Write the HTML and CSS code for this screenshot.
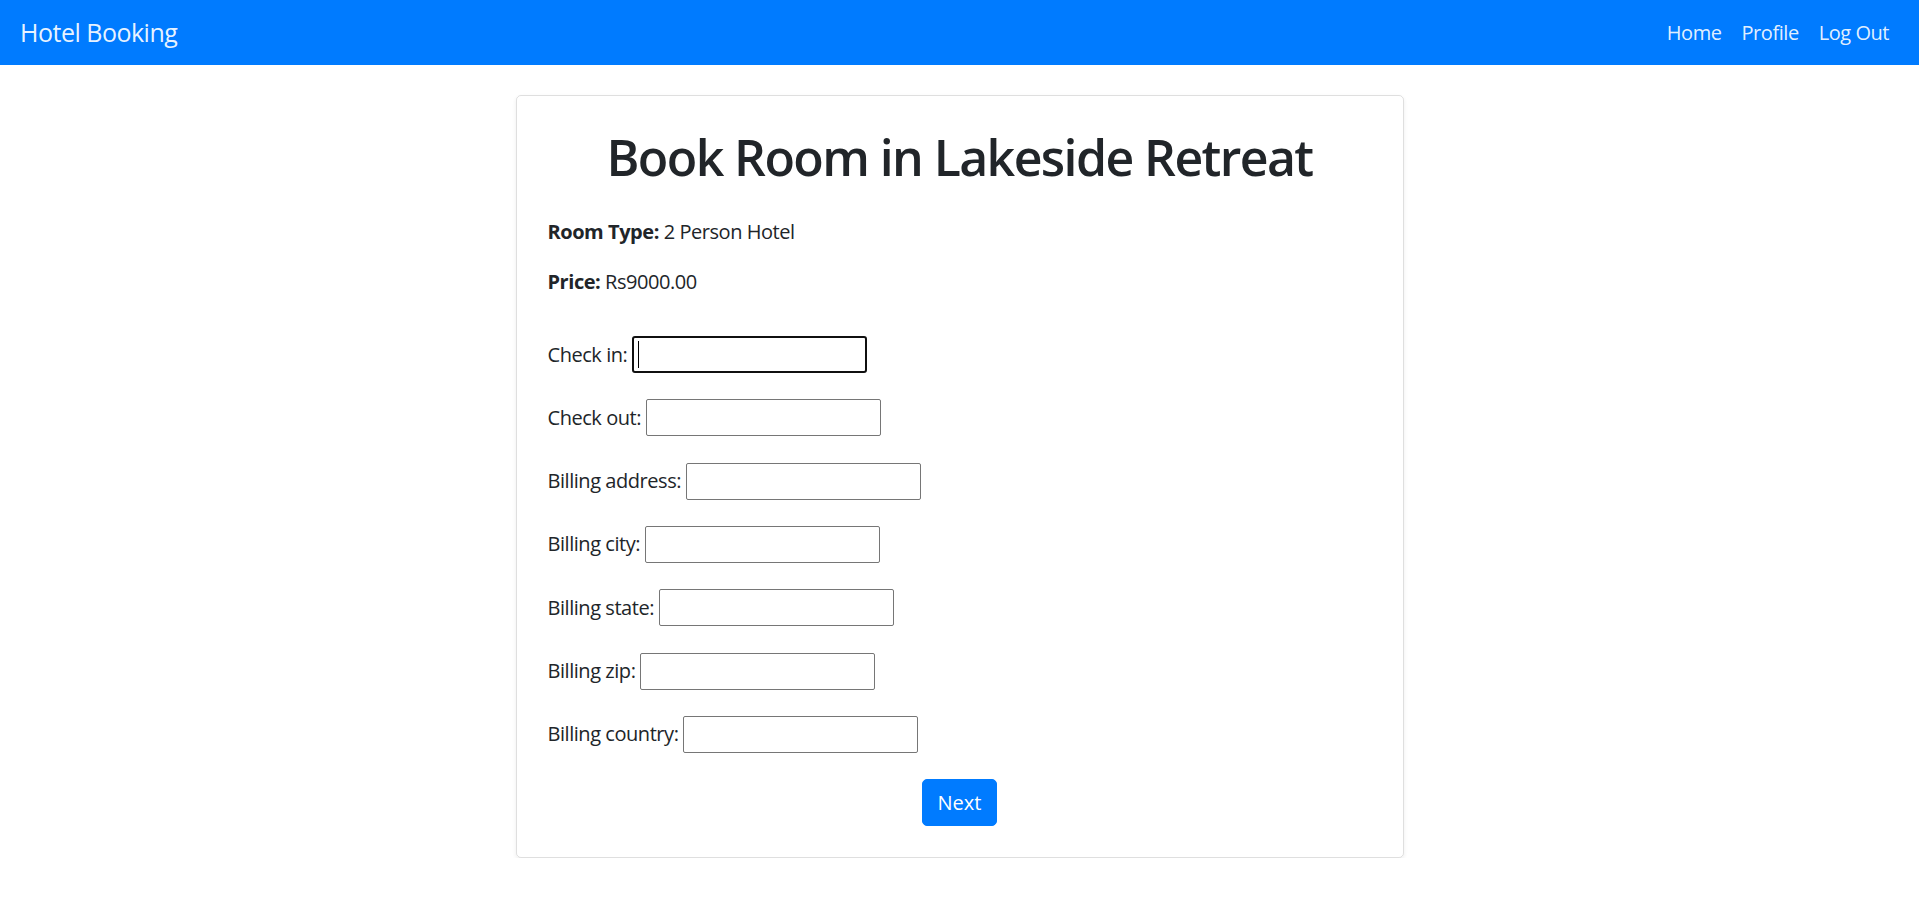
FILE: index.html
```html
<!DOCTYPE html>
<html lang="en">
<head>
<meta charset="utf-8">
<title>Book Room</title>
<link rel="stylesheet" href="styles.css">
</head>
<body>
<nav class="navbar">
  <a class="brand" href="#">Hotel Booking</a>
  <ul class="nav-links">
    <li><a href="#">Home</a></li>
    <li><a href="#">Profile</a></li>
    <li><a href="#">Log Out</a></li>
  </ul>
</nav>
<main class="page">
  <section class="card">
    <h1 class="title">Book Room in Lakeside Retreat</h1>
    <p class="info"><strong>Room Type:</strong> 2 Person Hotel</p>
    <p class="info"><strong>Price:</strong> Rs9000.00</p>
    <form class="booking-form">
      <div class="form-row">
        <label for="checkin">Check in:</label>
        <span class="field-wrap">
          <input class="field field-focused" id="checkin" type="text">
          <span class="caret"></span>
        </span>
      </div>
      <div class="form-row">
        <label for="checkout">Check out:</label>
        <input class="field" id="checkout" type="text">
      </div>
      <div class="form-row">
        <label for="address">Billing address:</label>
        <input class="field" id="address" type="text">
      </div>
      <div class="form-row">
        <label for="city">Billing city:</label>
        <input class="field" id="city" type="text">
      </div>
      <div class="form-row">
        <label for="state">Billing state:</label>
        <input class="field" id="state" type="text">
      </div>
      <div class="form-row">
        <label for="zip">Billing zip:</label>
        <input class="field" id="zip" type="text">
      </div>
      <div class="form-row">
        <label for="country">Billing country:</label>
        <input class="field" id="country" type="text">
      </div>
      <div class="form-actions">
        <button class="btn-primary" type="button">Next</button>
      </div>
    </form>
  </section>
</main>
</body>
</html>
```

FILE: styles.css
```css
* {
  box-sizing: border-box;
}

html, body {
  margin: 0;
  padding: 0;
}

body {
  font-family: "Open Sans", "Noto Sans", "Liberation Sans", sans-serif;
  font-size: 20px;
  line-height: 30px;
  letter-spacing: -0.45px;
  color: #212529;
  background: #fff;
}

.navbar {
  height: 65px;
  background: #007bff;
  display: flex;
  align-items: center;
  justify-content: space-between;
  padding: 0 20px;
}

.brand {
  font-size: 25px;
  line-height: 37px;
  letter-spacing: -0.5px;
  color: rgba(255, 255, 255, 0.92);
  text-decoration: none;
}

.nav-links {
  list-style: none;
  display: flex;
  margin: 0;
  padding: 0;
}

.nav-links a {
  display: block;
  padding: 0 10px;
  font-size: 20px;
  line-height: 30px;
  color: rgba(255, 255, 255, 0.9);
  text-decoration: none;
}

.page {
  display: flex;
  justify-content: center;
  padding-top: 30px;
}

.card {
  width: 888px;
  border: 1px solid rgba(0, 0, 0, 0.125);
  border-radius: 5px;
  box-shadow: 0 2px 4px rgba(0, 0, 0, 0.075);
  padding: 31px 31px 31px 31px;
}

.title {
  margin: 0 0 30px;
  text-align: center;
  font-size: 50px;
  line-height: 60px;
  font-weight: 600;
  letter-spacing: -1.6px;
}

.info {
  margin: 0 0 20px;
}

.info strong {
  font-weight: 700;
}

.booking-form {
  margin-top: 39px;
  display: flex;
  flex-direction: column;
  gap: 26.33px;
}

.form-row {
  display: flex;
  align-items: center;
  height: 37px;
}

.form-row label {
  margin-right: 5px;
}

.field-wrap {
  position: relative;
  display: inline-flex;
}

.field {
  width: 235px;
  height: 37px;
  border: 1px solid #767676;
  border-radius: 2px;
  background: #fff;
  font: inherit;
  padding: 0 3px;
  margin: 0;
}

.field-focused {
  border: 2px solid #101010;
  border-radius: 3px;
  outline: none;
}

.caret {
  position: absolute;
  left: 6px;
  top: 5px;
  width: 1px;
  height: 27px;
  background: #000;
}

.form-actions {
  display: flex;
  justify-content: center;
}

.btn-primary {
  font: inherit;
  color: #fff;
  background: #007bff;
  border: 1px solid #007bff;
  border-radius: 5px;
  height: 47px;
  padding: 0 15px;
  cursor: pointer;
}
```
